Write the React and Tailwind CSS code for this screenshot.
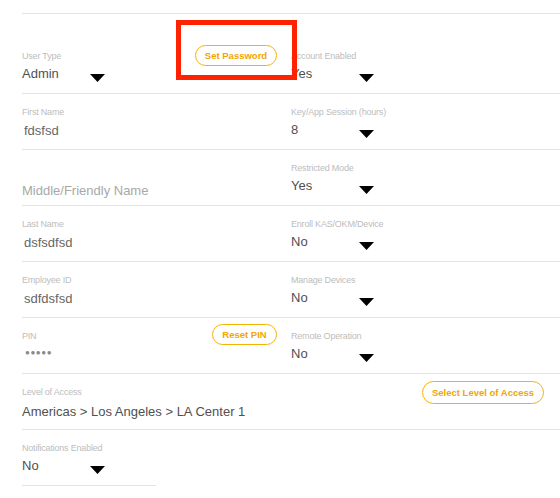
import React from 'react'

const font = { fontFamily: '"Liberation Sans", Arial, sans-serif' }

function Arrow() {
  return (
    <svg width="15" height="8" viewBox="0 0 15 8" className="absolute right-0 top-[9px]">
      <path d="M0 0 L15 0 L7.5 8 Z" fill="#000" />
    </svg>
  )
}

function Label({ children }) {
  return <div className="text-[9px] leading-[12px] text-[#bdbdbd] tracking-[-0.2px]">{children}</div>
}

function Select({ label, value }) {
  return (
    <div>
      <Label>{label}</Label>
      <div className="relative w-[83px] mt-[3px]">
        <div className="text-[13px] leading-[18px] text-[#505050]">{value}</div>
        <Arrow />
      </div>
    </div>
  )
}

function Text({ label, value }) {
  return (
    <div>
      <Label>{label}</Label>
      <div className="mt-[4px] pl-[2px] text-[13px] leading-[18px] text-[#666]">{value}</div>
    </div>
  )
}

function PillButton({ children, className = '' }) {
  return (
    <button className={`h-[21px] rounded-full border border-[#f5b400] text-[#f2a500] text-[9.5px] font-bold leading-none bg-white ${className}`}>
      {children}
    </button>
  )
}

const cellL = 'h-[56px] border-b border-[#e3e3e3] pt-[12px]'
const cellR = 'h-[56px] border-b border-[#e3e3e3] pt-[12px] pl-[11px]'

export default function App() {
  return (
    <div className="relative w-[560px] h-[498px] bg-white overflow-hidden" style={font}>
      <div className="pl-[22px] pt-[13px]">
        <div className="border-t border-[#e3e3e3] grid grid-cols-[258px_280px]">
          {/* row 1 */}
          <div className="h-[80px] border-b border-[#e3e3e3] flex justify-between pr-[3px]">
            <div className="pt-[36px]">
              <Select label="User Type" value="Admin" />
            </div>
            <PillButton className="mt-[31px] w-[82px]">Set Password</PillButton>
          </div>
          <div className="h-[80px] border-b border-[#e3e3e3] pt-[36px] pl-[11px]">
            <Select label="Account Enabled" value="Yes" />
          </div>

          <div className={cellL}><Text label="First Name" value="fdsfsd" /></div>
          <div className={cellR}><Select label="Key/App Session (hours)" value="8" /></div>

          <div className="h-[56px] border-b border-[#e3e3e3] pt-[32px]">
            <div className="text-[13px] leading-[18px] text-[#a8a8a8]">Middle/Friendly Name</div>
          </div>
          <div className={cellR}><Select label="Restricted Mode" value="Yes" /></div>

          <div className={cellL}><Text label="Last Name" value="dsfsdfsd" /></div>
          <div className={cellR}><Select label="Enroll KAS/OKM/Device" value="No" /></div>

          <div className={cellL}><Text label="Employee ID" value="sdfdsfsd" /></div>
          <div className={cellR}><Select label="Manage Devices" value="No" /></div>

          <div className="h-[56px] border-b border-[#e3e3e3] flex justify-between pr-[3px]">
            <div className="pt-[12px]">
              <Label>PIN</Label>
              <div className="mt-[5px] pl-[3px] text-[8px] leading-[12px] text-[#8a8a8a] tracking-[0.6px]">●●●●●</div>
            </div>
            <PillButton className="mt-[6px] w-[65px]">Reset PIN</PillButton>
          </div>
          <div className={cellR}><Select label="Remote Operation" value="No" /></div>

          {/* level of access */}
          <div className="col-span-2 h-[56px] border-b border-[#e3e3e3] flex justify-between pr-[16px]">
            <div className="pt-[12px]">
              <Label>Level of Access</Label>
              <div className="mt-[5px] text-[13px] leading-[18px] text-[#505050]">Americas &gt; Los Angeles &gt; LA Center 1</div>
            </div>
            <PillButton className="mt-[7px] h-[23px] w-[122px]">Select Level of Access</PillButton>
          </div>

          <div className="col-span-2 pt-[12px]">
            <div className="w-[134px] h-[44px] border-b border-[#e3e3e3]">
              <Select label="Notifications Enabled" value="No" />
            </div>
          </div>
        </div>
      </div>

      {/* annotation box */}
      <div className="absolute left-[176px] top-[20px] w-[121px] h-[60px] border-[5px] border-[#ff2200]" />
    </div>
  )
}
